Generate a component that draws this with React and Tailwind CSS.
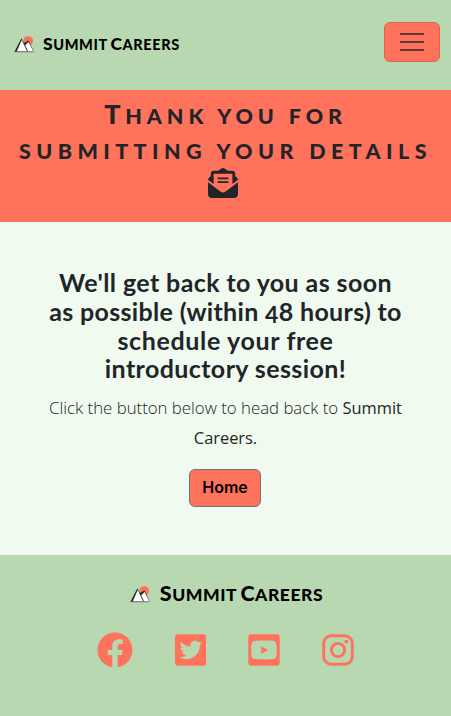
import { FaFacebook, FaTwitterSquare } from "react-icons/fa";
import { FaEnvelopeOpenText } from "react-icons/fa6";

function Logo() {
  return (
    <svg viewBox="0 0 20 17" className="h-[17px] w-5 shrink-0">
      <circle cx="14.2" cy="5" r="4.8" fill="#f9705c" />
      <path d="M0.3 16L7.4 2.2L10 7L14.5 4.5L19.8 15.6Z" fill="#252b28" />
      <path d="M2.8 15.2L7.8 4L13 15.2Z" fill="#fff" />
      <path d="M11.2 9.3L14.6 6L19.3 15.2H14Z" fill="#fff" />
      <path d="M1 16H19" stroke="#8b998a" strokeWidth="0.8" />
    </svg>
  );
}

function YoutubeSquare() {
  return (
    <svg viewBox="0 0 32 32" className="size-8 shrink-0" fill="currentColor">
      <path
        fillRule="evenodd"
        d="M3.3 0.3H28.7Q31.7 0.3 31.7 3.3V28.7Q31.7 31.7 28.7 31.7H3.3Q0.3 31.7 0.3 28.7V3.3Q0.3 0.3 3.3 0.3ZM16 6.6C11.5 6.6 7 6.8 5.6 7.3C4 7.9 3.2 9 3.2 16C3.2 23 4 24.1 5.6 24.7C7 25.2 11.5 25.4 16 25.4C20.5 25.4 25 25.2 26.4 24.7C28 24.1 28.8 23 28.8 16C28.8 9 28 7.9 26.4 7.3C25 6.8 20.5 6.6 16 6.6Z"
      />
      <path d="M13.2 12.2L20.2 16L13.2 19.8Z" />
    </svg>
  );
}

function Instagram() {
  return (
    <svg viewBox="0 0 32 32" className="size-8 shrink-0" fill="none" stroke="currentColor" strokeWidth="2.9">
      <rect x="1.7" y="1.7" width="28.6" height="28.6" rx="7.6" />
      <circle cx="16" cy="16" r="6.6" />
      <circle cx="24.3" cy="7.6" r="1.9" fill="currentColor" stroke="none" />
    </svg>
  );
}

export default function App() {
  return (
    <div className="flex h-[716px] w-full flex-col bg-[#f0faef] font-['Lato',sans-serif] text-[#212529]">
      <header className="flex h-[90px] shrink-0 items-start justify-between bg-[#b8d8b2] pr-[11px] pl-[14px] pt-[22px]">
        <a className="flex items-center pt-[10px] text-black">
          <Logo />
          <span className="ml-[9px] text-[14.5px] leading-6 font-black tracking-[0.6px] whitespace-nowrap">
            <span className="text-[17.5px]">S</span>UMMIT <span className="-ml-px text-[17.5px]">C</span>AREERS
          </span>
        </a>
        <button className="flex h-10 w-14 flex-col items-center justify-center gap-[6px] rounded-md border border-[#d9654f] bg-[#ff725c]">
          <span className="h-[2px] w-6 bg-[#64393a]" />
          <span className="h-[2px] w-6 bg-[#64393a]" />
          <span className="h-[2px] w-6 bg-[#64393a]" />
        </button>
      </header>

      <section className="flex h-[132px] shrink-0 flex-col items-center bg-[#ff725c] pt-[6px]">
        <h1 className="text-center text-[21.5px] leading-[35px] font-black whitespace-nowrap">
          <span className="block tracking-[4.9px]"><span className="text-[27px]">T</span>HANK YOU FOR</span>
          <span className="block tracking-[5.4px]">SUBMITTING YOUR DETAILS</span>
        </h1>
        <FaEnvelopeOpenText className="-mt-px -ml-[5px] size-[30px]" />
      </section>

      <main className="flex h-[333px] shrink-0 flex-col items-center pt-[46px]">
        <h2 className="text-center text-[25px] leading-[28.8px] font-bold whitespace-nowrap">
          <span className="block tracking-[0.4px]">We'll get back to you as soon</span>
          <span className="block tracking-[0.33px]">as possible (within <span className="relative top-[2px] text-[23px] leading-none">4</span>8 hours) to</span>
          <span className="block tracking-[0.65px]">schedule your free</span>
          <span className="block tracking-[0.4px]">introductory session!</span>
        </h2>
        <p className="mt-[10px] text-center font-['Open_Sans',sans-serif] text-[16.8px] leading-[30px] font-light whitespace-nowrap">
          Click the button below to head back to <span className="text-[16.4px] font-normal">Summit<br />Careers.</span>
        </p>
        <a className="mt-4 mr-px flex h-[38px] w-[72px] items-center justify-center rounded-md border border-[#6c757d] bg-[#ff725c] pb-[2px] font-['Inter',sans-serif] text-[16px] font-semibold text-black">
          Home
        </a>
      </main>

      <footer className="flex grow flex-col items-center bg-[#b8d8b2] pt-[26px]">
        <a className="flex items-center pl-[2px] text-black">
          <Logo />
          <span className="ml-[10px] text-[17.5px] leading-6 font-black tracking-[0.55px] whitespace-nowrap">
            <span className="text-[21.5px]">S</span>UMMIT <span className="-ml-px text-[21.5px]">C</span>AREERS
          </span>
        </a>
        <div className="mt-[25px] flex items-center gap-[41.7px] text-[#ff725c]">
          <FaFacebook className="size-9" />
          <FaTwitterSquare className="h-9 w-[31.5px]" />
          <YoutubeSquare />
          <Instagram />
        </div>
      </footer>
    </div>
  );
}
